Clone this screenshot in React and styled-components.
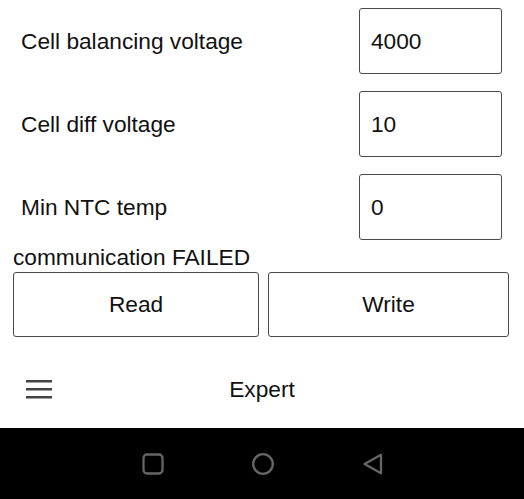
import React from "react";
import styled, { createGlobalStyle } from "styled-components";

const Global = createGlobalStyle`
  html, body { margin: 0; padding: 0; background: #fff; }
  body { font-family: "Liberation Sans", Arial, sans-serif; color: #111; }
`;

const Screen = styled.div`
  width: 524px;
  height: 499px;
  display: flex;
  flex-direction: column;
  overflow: hidden;
`;

const Form = styled.div`
  display: flex;
  flex-direction: column;
  gap: 17px;
  padding: 8px 22px 0 21px;
`;

const Row = styled.div`
  display: flex;
  align-items: center;
  justify-content: space-between;
  height: 66px;
`;

const Label = styled.span`
  font-size: 22.7px;
`;

const ValueBox = styled.div`
  width: 143px;
  height: 66px;
  box-sizing: border-box;
  border: 1.5px solid #4a4a4a;
  border-radius: 3px;
  display: flex;
  align-items: center;
  padding-left: 11px;
  font-size: 22.7px;
`;

const Status = styled.div`
  font-size: 22.7px;
  line-height: 30px;
  padding-left: 13px;
  margin-top: 2px;
`;

const Buttons = styled.div`
  display: grid;
  grid-template-columns: 246px 241px;
  gap: 9px;
  padding-left: 13px;
`;

const Button = styled.button`
  height: 65px;
  box-sizing: border-box;
  border: 1.5px solid #4a4a4a;
  border-radius: 3px;
  background: #fff;
  font-family: inherit;
  font-size: 22.7px;
  color: #111;
`;

const AppBar = styled.div`
  flex: 1;
  display: flex;
  align-items: center;
  position: relative;
  padding-left: 26px;
  padding-top: 14px;
  box-sizing: border-box;
`;

const Title = styled.div`
  position: absolute;
  left: 0;
  right: 0;
  text-align: center;
  font-size: 22.7px;
  pointer-events: none;
`;

const NavBar = styled.div`
  height: 71px;
  background: #000;
  display: flex;
  align-items: center;
  justify-content: center;
  gap: 86px;
  padding-left: 2px;
`;

const Menu = () => (
  <svg width="26" height="19" viewBox="0 0 26 19">
    <rect x="0" y="0" width="26" height="2.5" fill="#444" />
    <rect x="0" y="8" width="26" height="2.5" fill="#444" />
    <rect x="0" y="16" width="26" height="2.5" fill="#444" />
  </svg>
);

const NavIcon = ({ kind }) => (
  <svg width="24" height="24" viewBox="0 0 24 24">
    {kind === "square" && (
      <rect x="2.5" y="2.5" width="19" height="19" rx="3.5" fill="none" stroke="#666" strokeWidth="2.3" />
    )}
    {kind === "circle" && (
      <circle cx="12" cy="12" r="9.8" fill="none" stroke="#666" strokeWidth="2.3" />
    )}
    {kind === "back" && (
      <path d="M20 2.8 L3.5 12 L20 21.2 Z" fill="none" stroke="#666" strokeWidth="2.3" strokeLinejoin="round" />
    )}
  </svg>
);

const fields = [
  ["Cell balancing voltage", "4000"],
  ["Cell diff voltage", "10"],
  ["Min NTC temp", "0"],
];

export default function App() {
  return (
    <Screen>
      <Global />
      <Form>
        {fields.map(([l, v]) => (
          <Row key={l}>
            <Label>{l}</Label>
            <ValueBox>{v}</ValueBox>
          </Row>
        ))}
      </Form>
      <Status>communication FAILED</Status>
      <Buttons>
        <Button>Read</Button>
        <Button>Write</Button>
      </Buttons>
      <AppBar>
        <Menu />
        <Title>Expert</Title>
      </AppBar>
      <NavBar>
        <NavIcon kind="square" />
        <NavIcon kind="circle" />
        <NavIcon kind="back" />
      </NavBar>
    </Screen>
  );
}
